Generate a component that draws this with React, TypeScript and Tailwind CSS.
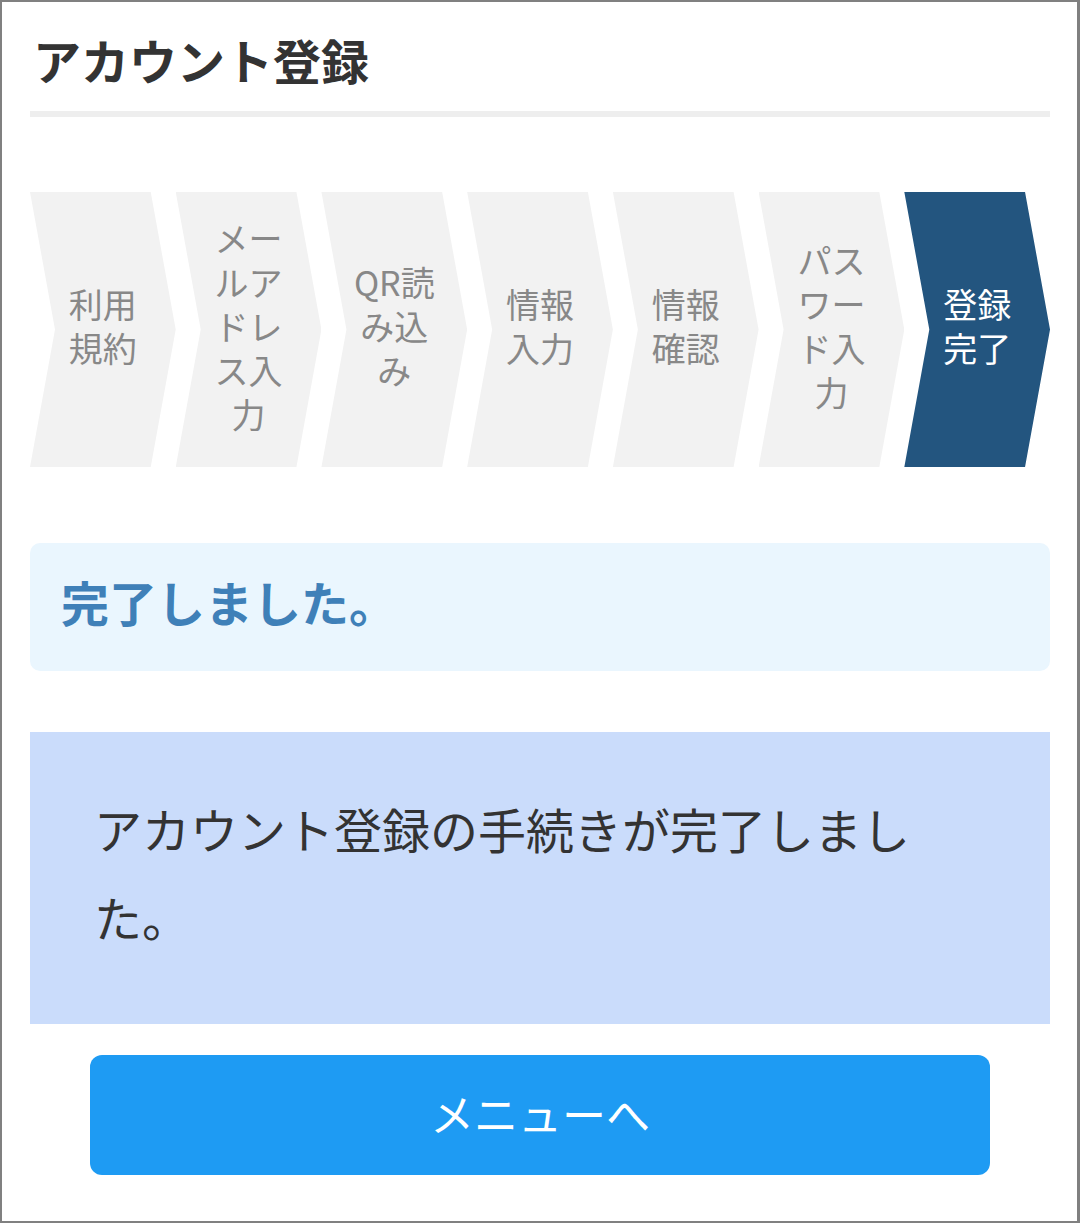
import React from "react";

const steps: { label: string; active?: boolean }[] = [
  { label: "利用規約" },
  { label: "メールアドレス入力" },
  { label: "QR読み込み" },
  { label: "情報入力" },
  { label: "情報確認" },
  { label: "パスワード入力" },
  { label: "登録完了", active: true },
];

export default function App() {
  return (
    <div className="h-[1223px] w-[1080px] border-t-2 border-l-2 border-b-2 border-r-[3px] border-[#808080] bg-white [font-family:'Noto_Sans_CJK_JP','Noto_Sans',sans-serif] pl-[28px] pr-[27px] pt-[21px]">
      <div className="pb-[16px] border-b-[6px] border-[#eeeeee]">
        <h1 className="text-[48px] leading-[72px] font-bold text-[#333333] pl-[3px]">アカウント登録</h1>
      </div>

      <div className="mt-[75px] flex h-[275px]">
        {steps.map((s) => (
          <div
            key={s.label}
            className={
              "flex-1 flex items-center justify-center px-[28px] pb-[8px] text-center text-[34px] leading-[44px] [clip-path:polygon(0_0,calc(100%_-_25px)_0,100%_50%,calc(100%_-_25px)_100%,0_100%,25px_50%)] " +
              (s.active ? "bg-[#23557f] text-white" : "bg-[#f2f2f2] text-[#888888]")
            }
          >
            <span className="block w-full break-all">{s.label}</span>
          </div>
        ))}
      </div>

      <div className="mt-[76px] h-[128px] rounded-[10px] bg-[#eaf6fe] flex items-center pl-[31px] pb-[12px]">
        <p className="text-[48px] font-bold text-[#3f80b8]">完了しました。</p>
      </div>

      <div className="mt-[61px] h-[292px] bg-[#cadcfb] pl-[64px] pr-[114px] pt-[52px]">
        <p className="text-[48px] leading-[88px] text-[#333333]">アカウント登録の手続きが完了しました。</p>
      </div>

      <div className="mt-[31px] flex justify-center">
        <button className="w-[900px] h-[120px] rounded-[12px] bg-[#1e9bf3] text-white text-[44px] flex items-center justify-center pb-[4px]">
          メニューへ
        </button>
      </div>
    </div>
  );
}
